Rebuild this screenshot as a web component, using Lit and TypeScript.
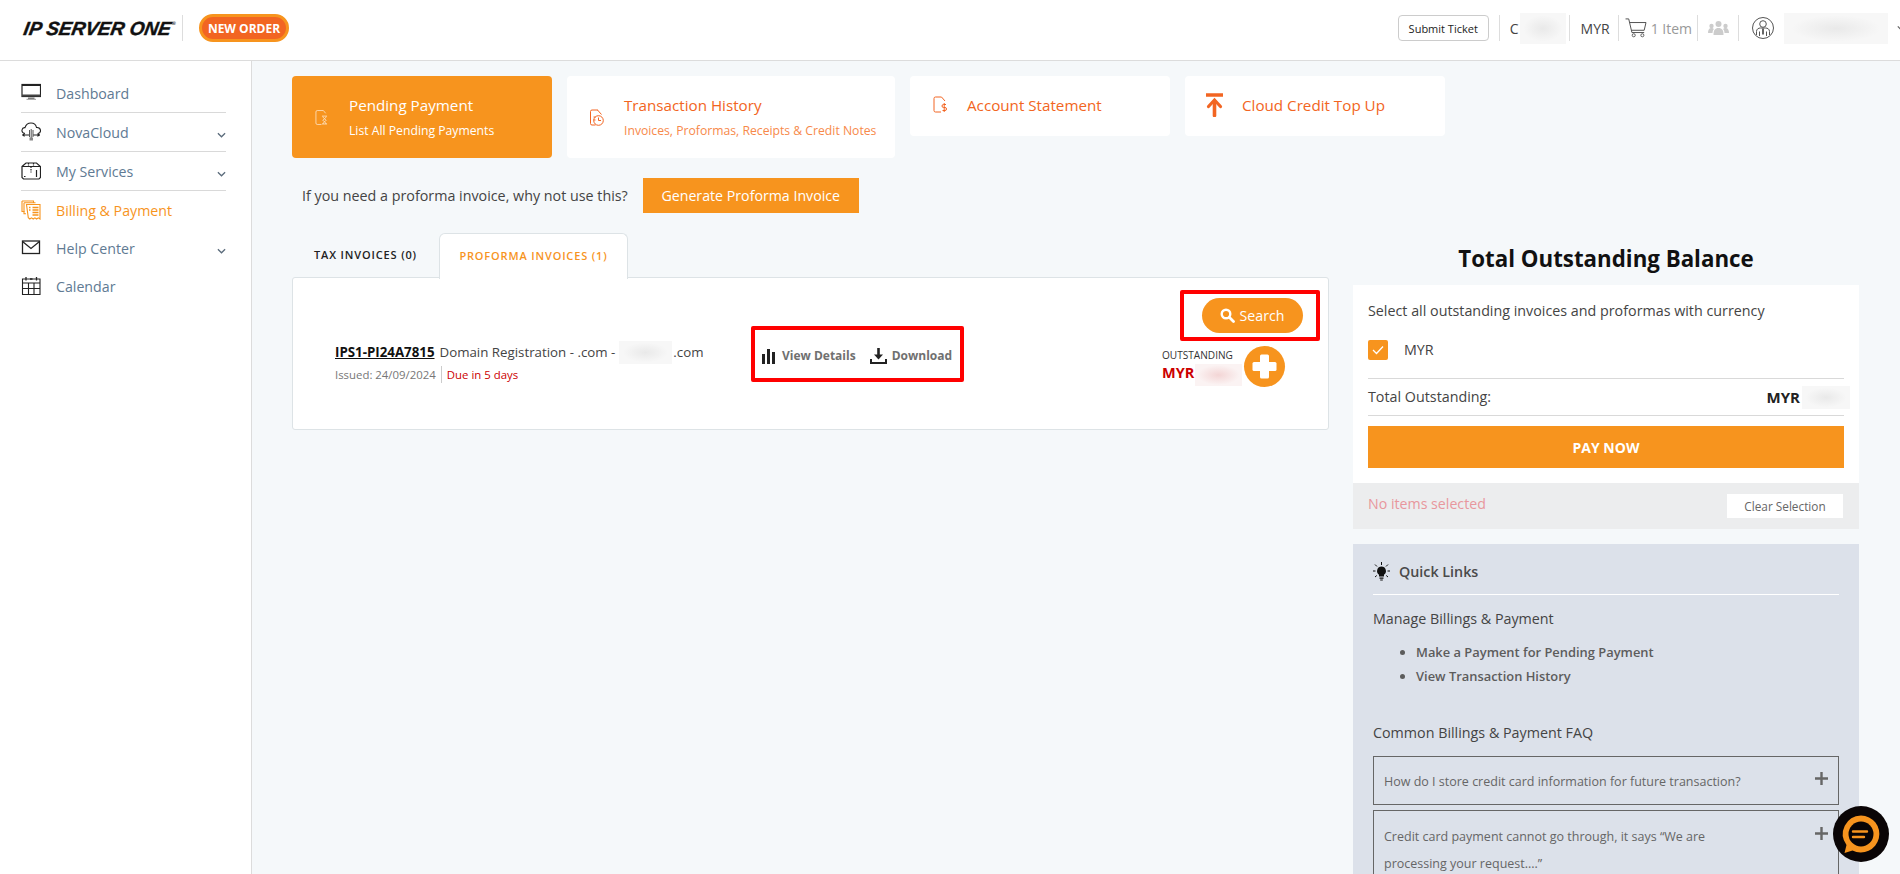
import { LitElement, html, css, svg } from 'lit';
import { customElement } from 'lit/decorators.js';

const chevron = html`<svg class="chev" viewBox="0 0 10 6" width="9" height="6"><path d="M1 1l4 4 4-4" fill="none" stroke="#5a6b7b" stroke-width="1.4"/></svg>`;

const navIcons: Record<string, unknown> = {
  monitor: svg`<rect x="1" y="1.5" width="18.500" height="12" fill="none" stroke="#222" stroke-width="1.2"/><rect x="1" y="1" width="18.500" height="2" fill="#222"/><rect x="1" y="11.500" width="18.500" height="2" fill="#444"/><path d="M7 14.500h6.500v1.500H7z" fill="#777"/><path d="M5.500 16.300h9.500" stroke="#999" stroke-width="1"/>`,
  cloud: svg`<path d="M4 11.500C1.500 11 .7 9.500 1 8c.3-1.600 1.700-2.500 3-2.300C4.800 3 7.200 1 10 1c3 0 5 2 5.500 4.500 2-.2 3.800 1 4 3 .1 1.500-.8 2.600-2.500 3" fill="none" stroke="#222" stroke-width="1.100"/><path d="M1.500 13h7M12 13h7" stroke="#222" stroke-width="1.200"/><path d="M3.500 11l-2.500 2 2.500 2zM16.500 11l2.500 2-2.500 2z" fill="#222"/><path d="M8.500 8v7M10.200 7v9M12 8v7" stroke="#555" stroke-width="1"/><rect x="8.500" y="15.500" width="3.500" height="3" fill="#888"/>`,
  box: svg`<path d="M1 5.500L5 2h10.500l4 3.500v11l-1.500 1.500H2.500L1 16.500zM1 5.500h18.500" fill="none" stroke="#222" stroke-width="1.200"/><path d="M7.500 2v3.500M12.500 2v3.500M10 5.500v6" stroke="#222" stroke-width="1.200" stroke-dasharray="1.500 1"/><path d="M3 15.500h1.500M15.500 9v7" stroke="#222" stroke-width="1.200"/>`,
  billing: svg`<g fill="none" stroke="#f7941e" stroke-width="1.100"><path d="M1 1h11.500v2M1 1v10.500h2.500"/><path d="M3 2.800h11.500M3 2.800v11h2"/><path d="M5.500 4.500h13.500v14.500l-1.700-1.200-1.700 1.200-1.700-1.200-1.700 1.200-1.700-1.200-1.700 1.200-1.500-1.200z"/><path d="M11.500 7.500h6M11.500 10h6M11.500 12.500h6M11.500 15h6M8 7.500h1.500M8 10h1.500" stroke-width="1.300"/></g>`,
  mail: svg`<rect x="1.500" y="3" width="17" height="12.500" fill="none" stroke="#222" stroke-width="1.300"/><path d="M1.500 3.500L10 10.500l8.500-7" fill="none" stroke="#222" stroke-width="1.300"/>`,
  calendar: svg`<g fill="none" stroke="#222" stroke-width="1.100"><path d="M1.500 3h17.500v15.500H1.500zM1.500 7h17.500M1.500 12.500h17.500M7.500 7v11.500M13 7v11.500"/><path d="M5 1v3.500M15.500 1v3.500M9 3h2.500" stroke-width="1.300"/></g>`,
};

const cardIcons: Record<string, unknown> = {
  hourglass: svg`<g fill="none" stroke="rgba(255,255,255,.65)" stroke-width="1"><path d="M9 1H2.500A1.500 1.500 0 0 0 1 2.500v12A1.500 1.500 0 0 0 2.500 16H7"/><path d="M9 1l2.500 3"/><path d="M7.500 7h5.500M7.500 15.500h5.500M8.500 7.500c0 2 3.500 3 3.500 4s-3.500 2-3.500 4M12 7.500c0 2-3.500 3-3.500 4s3.500 2 3.500 4"/></g>`,
  clock: svg`<g fill="none" stroke="#f26522" stroke-width="1"><path d="M8.500 1H2.500A1.500 1.500 0 0 0 1 2.500v12A1.500 1.500 0 0 0 2.500 16H6"/><path d="M8 1l4 4.500"/><circle cx="9" cy="11.500" r="4.800"/><path d="M9 8.500v3h2.500M4 8h2M4 11h2"/></g>`,
  dollar: svg`<g fill="none" stroke="#f26522" stroke-width="1"><path d="M8.500 1H2.500A1.500 1.500 0 0 0 1 2.500v12A1.500 1.500 0 0 0 2.500 16H8"/><path d="M8.500 1l3.500 4"/><path d="M13 8.500h-2.500a1.200 1.200 0 0 0 0 3h1.500a1.200 1.200 0 0 1 0 3H9.500M11.200 7v9"/></g>`,
  upload: svg`<path d="M.5 1.500h16" stroke="#f26522" stroke-width="3.400" stroke-linecap="round" transform="translate(0 .5)"/><path d="M8.500 22.500V8" stroke="#f26522" stroke-width="3.600" stroke-linecap="round"/><path d="M2.500 13.500L8.500 7l6 6.500" fill="none" stroke="#f26522" stroke-width="3.200" stroke-linecap="round"/>`,
};

const tiles = [
  { icon: 'hourglass', w: 13, h: 17, vb: '0 0 14 17', title: 'Pending Payment', sub: 'List All Pending Payments', cls: 'tile active wide' },
  { icon: 'clock', w: 16, h: 17, vb: '0 0 15 17', title: 'Transaction History', sub: 'Invoices, Proformas, Receipts & Credit Notes', cls: 'tile second' },
  { icon: 'dollar', w: 14, h: 17, vb: '0 0 14 17', title: 'Account Statement', sub: '', cls: 'tile third' },
  { icon: 'upload', w: 17, h: 24, vb: '0 0 17 24', title: 'Cloud Credit Top Up', sub: '', cls: 'tile fourth' },
];

const nav = [
  { icon: 'monitor', label: 'Dashboard', more: false, line: true },
  { icon: 'cloud', label: 'NovaCloud', more: true, line: true },
  { icon: 'box', label: 'My Services', more: true, line: true },
  { icon: 'billing', label: 'Billing & Payment', more: false, line: false, on: true },
  { icon: 'mail', label: 'Help Center', more: true, line: false },
  { icon: 'calendar', label: 'Calendar', more: false, line: false },
];

@customElement('app-root')
export class AppRoot extends LitElement {
  static styles = css`
    :host {
      display: block;
      height: 874px;
      overflow: hidden;
      position: relative;
      font-family: "Open Sans", "Liberation Sans", sans-serif;
      color: #333;
      background: #f5f8fa;
    }

    /* header */
    .top {
      height: 61px;
      box-sizing: border-box;
      background: #fff;
      border-bottom: 1px solid #dcdcdc;
      display: flex;
      align-items: center;
      padding: 0 0 4px 24px;
    }
    .logo {
      font: italic 700 19px/1 "Liberation Sans", sans-serif;
      -webkit-text-stroke: .4px #111;
      color: #111;
      width: 146px;
      white-space: nowrap;
      transform: skewX(-10deg);
      transform-origin: 0 50%;
    }
    .logo sup { font-size: 5px; vertical-align: 10px; font-style: normal; -webkit-text-stroke: 0; }
    .logo-sep { width: 1px; height: 26px; background: #ddd; margin: 0 16px 0 12px; }
    .new-order {
      width: 90px;
      height: 28px;
      box-sizing: border-box;
      border: 3px solid #f7941e;
      border-radius: 14px;
      background: #f26522;
      color: #fff;
      font-size: 12px;
      font-weight: 700;
      display: flex;
      align-items: center;
      justify-content: center;
    }
    .top-right { margin-left: auto; margin-right: -5px; display: flex; align-items: center; height: 100%; }
    .ticket {
      width: 91px;
      height: 26px;
      box-sizing: border-box;
      border: 1px solid #ccc;
      border-radius: 4px;
      font-size: 11px;
      color: #222;
      display: flex;
      align-items: center;
      justify-content: center;
    }
    .v { width: 1px; height: 26px; background: #ddd; }
    .ccy { font-size: 14px; color: #444; margin: 0 8px 0 11px; }
    .ccy.c { margin: 0 1px 0 10px; }
    .smudge { display: inline-block; background: radial-gradient(closest-side, #e9e9e9, #f7f7f7 85%); }
    .top-right .name { width: 46px; height: 31px; }
    .top-right .user { width: 104px; height: 31px; margin-left: 10px; }
    .items { font-size: 14px; color: #999; margin: 0 5px 0 4px; white-space: nowrap; }
    .cart { margin-left: 6px; }
    .people { margin: 0 9px 0 10px; }
    .person { margin-left: 13px; }
    .user-chev { margin-left: 9px; }

    /* page */
    .page { display: flex; height: 813px; }
    aside {
      width: 252px;
      flex: none;
      box-sizing: border-box;
      background: #fff;
      border-right: 1px solid #dcdcdc;
      padding: 13px 0 0 21px;
    }
    .nav-item {
      width: 205px;
      height: 38px;
      box-sizing: border-box;
      display: flex;
      align-items: center;
      font-size: 14.200px;
      color: #607a93;
      position: relative;
    }
    .nav-item.line { height: 39px; border-bottom: 1px solid #d9d9d9; }
    .nav-item.on { color: #f7941e; }
    .nav-item svg.ico { width: 20px; height: 20px; margin-right: 15px; flex: none; }
    .chev { margin-left: auto; margin-top: 6px; }

    main { flex: 1; padding: 15px 0 0 40px; min-width: 0; }
    .tiles { display: flex; gap: 15px; align-items: flex-start; }
    .tile {
      box-sizing: border-box;
      background: #fff;
      border-radius: 4px;
      height: 60px;
      width: 260px;
      display: flex;
      align-items: center;
      color: #f26522;
    }
    .tile .t-ico { flex: none; }
    .tile b { display: block; font-weight: 400; font-size: 15.200px; line-height: 20px; white-space: nowrap; }
    .tile small { display: block; font-size: 12.200px; line-height: 18px; margin-top: 7px; color: #f7894a; white-space: nowrap; }
    .tile.active { background: #f7941e; color: #fff; height: 82px; padding-left: 23px; }
    .tile.active small { color: #fff; }
    .tile.active .t-ico { margin-right: 21px; }
    .tile.second { width: 328px; height: 82px; padding-left: 22px; }
    .tile.second .t-ico { margin-right: 19px; }
    .tile.third { padding: 0 0 3px 23px; }
    .tile.third .t-ico { margin-right: 20px; }
    .tile.fourth { padding: 0 0 3px 21px; }
    .tile.fourth .t-ico { margin-right: 19px; }

    .proforma { display: flex; align-items: center; margin: 20px 0 0 10px; font-size: 14.300px; color: #444; }
    .proforma button {
      margin-left: 15px;
      width: 216px;
      height: 35px;
      border: 0;
      background: #f7941e;
      color: #fff;
      font: 400 14.200px "Open Sans", sans-serif;
    }

    .cols { display: flex; gap: 24px; margin-top: 20px; }
    .left { width: 1037px; flex: none; }
    .tabs { display: flex; height: 45px; position: relative; z-index: 1; }
    .tab {
      font-size: 11px;
      font-weight: 600;
      letter-spacing: .85px;
      color: #222;
      display: flex;
      align-items: center;
      justify-content: center;
      box-sizing: border-box;
      white-space: nowrap;
      padding-bottom: 2px;
    }
    .tab.off { width: 147px; }
    .tab.sel {
      width: 189px;
      color: #f7941e;
      background: #fff;
      border: 1px solid #dde3e6;
      border-bottom: 0;
      border-radius: 6px 6px 0 0;
      height: 46px;
    }
    .panel {
      height: 153px;
      margin-top: -1px;
      box-sizing: border-box;
      background: #fff;
      border: 1px solid #dde3e6;
      border-radius: 3px;
      position: relative;
    }
    .row {
      position: absolute;
      left: 42px;
      top: 63px;
      font-size: 13.300px;
      color: #444;
      white-space: nowrap;
    }
    .row .first { display: flex; align-items: center; height: 22px; }
    .row a { font-weight: 700; color: #111; text-decoration: underline; margin-right: 5px; }
    .row .dom { width: 53px; height: 23px; margin: 0 1px 0 4px; }
    .row .meta { display: flex; align-items: center; font-size: 11.400px; color: #777; margin-top: 2px; height: 18px; }
    .row .meta i { width: 1px; height: 17px; background: #ccc; margin: 0 5px; }
    .row .meta em { font-style: normal; color: #c00; }

    .mark { position: absolute; box-sizing: border-box; border: 4px solid #f00; border-radius: 2px; }
    .actions {
      left: 458px;
      top: 48px;
      width: 213px;
      height: 56px;
      display: flex;
      align-items: center;
      padding: 2px 0 0 7px;
      font-size: 12px;
      font-weight: 700;
      color: #707070;
      white-space: nowrap;
    }
    .actions svg { flex: none; margin-top: 2px; }
    .actions .bars { margin-right: 6px; }
    .actions .down { margin: 2px 5px 0 14px; }
    .search-mark { left: 887px; top: 12px; width: 140px; height: 51px; display: flex; align-items: center; justify-content: center; padding-left: 4px; }
    .search {
      width: 101px;
      height: 35px;
      border-radius: 18px;
      background: #f7941e;
      color: #fff;
      display: flex;
      align-items: center;
      justify-content: center;
      gap: 5px;
      font-size: 14.200px;
    }
    .out { position: absolute; left: 869px; top: 68px; white-space: nowrap; }
    .out span { display: block; font-size: 10.100px; line-height: 18px; color: #333; }
    .out strong { display: flex; align-items: center; height: 18px; font-size: 14.500px; line-height: 18px; color: #c00; }
    .out strong i { width: 47px; height: 22px; background: radial-gradient(closest-side, #f3d5d5, #fbf3f3 90%); margin: 4px 0 0 1px; }
    .plus {
      position: absolute;
      left: 951px;
      top: 68px;
      width: 41px;
      height: 41px;
      border-radius: 50%;
      background: #f7941e;
    }

    .right { width: 506px; flex: none; }
    .right h2 { margin: 0; height: 52px; line-height: 52px; text-align: center; font-size: 22.300px; font-weight: 700; color: #111; }
    .sum { background: #fff; height: 198px; box-sizing: border-box; padding: 15px 15px 0; font-size: 14.300px; color: #444; }
    .sum p { margin: 0; line-height: 22px; }
    .check { display: flex; align-items: center; height: 20px; margin-top: 18px; gap: 16px; }
    .check i { width: 20px; height: 20px; border-radius: 2px; background: #f7941e; display: flex; align-items: center; justify-content: center; }
    .check span, .total > span { padding-bottom: 2px; }
    .total {
      margin-top: 18px;
      height: 36px;
      border-top: 1px solid #d9d9d9;
      border-bottom: 1px solid #d9d9d9;
      display: flex;
      align-items: center;
      justify-content: space-between;
    }
    .total strong { display: flex; align-items: center; font-size: 15px; color: #222; margin-right: -6px; }
    .total strong i { width: 48px; height: 23px; margin-left: 2px; }
    .pay {
      width: 100%;
      height: 42px;
      margin-top: 10px;
      border: 0;
      background: #f7941e;
      color: #fff;
      font: 700 14px "Open Sans", sans-serif;
    }
    .none {
      background: #ecedee;
      height: 46px;
      box-sizing: border-box;
      display: flex;
      align-items: center;
      justify-content: space-between;
      padding: 0 16px 6px 15px;
      font-size: 14.200px;
      color: #e8979d;
    }
    .none span {
      width: 116px;
      height: 24px;
      margin-top: 6px;
      background: #fff;
      color: #666;
      font-size: 11.800px;
      display: flex;
      align-items: center;
      justify-content: center;
    }
    .links { margin-top: 15px; background: #dce1ea; height: 340px; box-sizing: border-box; padding: 14px 20px 0; color: #444; font-size: 14.300px; }
    .links header { display: flex; align-items: center; gap: 9px; height: 27px; padding-bottom: 9px; border-bottom: 1px solid #fff; font-weight: 600; color: #4a4a4a; }
    .links .h { margin: 13px 0 0; line-height: 22px; }
    .links ul { margin: 10px 0 0; padding: 0 0 0 43px; font-size: 12.900px; font-weight: 600; color: #5c5c5c; }
    .links li { line-height: 24px; }
    .links .faq-h { margin-top: 34px; }
    .faq {
      position: relative;
      border: 1px solid #666;
      box-sizing: border-box;
      padding: 2px 50px 0 10px;
      font-size: 12.500px;
      line-height: 27px;
      color: #666;
      margin-top: 12px;
      height: 49px;
      display: flex;
      align-items: center;
    }
    .faq.two { margin-top: 5px; height: 80px; align-items: flex-start; padding: 12px 100px 0 10px; }
    .faq svg { position: absolute; right: 10px; top: 15px; }
    .faq.two svg { top: 16px; }
    .chat { position: absolute; left: 1833px; top: 806px; }
  `;

  render() {
    return html`
      <div class="top">
        <div class="logo">IP SERVER ONE<sup>®</sup></div>
        <div class="logo-sep"></div>
        <div class="new-order">NEW ORDER</div>
        <div class="top-right">
          <div class="ticket">Submit Ticket</div>
          <div class="v" style="margin-left:10px"></div>
          <span class="ccy c">C</span>
          <span class="smudge name"></span>
          <div class="v" style="margin-left:3px"></div>
          <span class="ccy">MYR</span>
          <div class="v"></div>
          <svg class="cart" width="22" height="20" viewBox="0 0 24 22">
            <path d="M.5 1h3.500l3.500 15h13.500M5 5h18l-2 8.500H7" fill="none" stroke="#555" stroke-width="1.100"/>
            <circle cx="9.500" cy="19" r="1.700" fill="none" stroke="#555"/><circle cx="19" cy="19" r="1.700" fill="none" stroke="#555"/>
          </svg>
          <span class="items">1 Item</span>
          <div class="v"></div>
          <svg class="people" width="21" height="14" viewBox="0 0 21 14" fill="#ccc">
            <circle cx="10.500" cy="3" r="3"/><circle cx="3.500" cy="5" r="2.200"/><circle cx="17.500" cy="5" r="2.200"/>
            <path d="M5.500 14c0-5 1.500-7 5-7s5 2 5 7z"/><path d="M0 12c0-3 1-5 3.500-5 1 0 2 .5 2.500 1-1 1-1.500 2.500-1.500 4zM21 12c0-3-1-5-3.500-5-1 0-2 .5-2.500 1 1 1 1.500 2.500 1.500 4z"/>
          </svg>
          <div class="v"></div>
          <svg class="person" width="22" height="22" viewBox="0 0 22 22" fill="none" stroke="#555" stroke-width="1">
            <circle cx="11" cy="11" r="10.500"/><circle cx="11" cy="7" r="3.300"/>
            <path d="M4.500 18v-3.500c0-2.500 2-3.500 4-3.500h5c2 0 4 1 4 3.500V18M7.500 14.500V19M14.500 14.500V19"/><path d="M11 11.500v6" stroke-width="1.800"/>
          </svg>
          <span class="smudge user"></span>
          <svg class="user-chev" width="8" height="6" viewBox="0 0 10 6"><path d="M1 1l4 4 4-4" fill="none" stroke="#666" stroke-width="1.500"/></svg>
        </div>
      </div>

      <div class="page">
        <aside>
          ${nav.map(n => html`
            <div class="nav-item ${n.line ? 'line' : ''} ${n.on ? 'on' : ''}">
              <svg class="ico" viewBox="0 0 20 20">${navIcons[n.icon]}</svg>
              ${n.label}
              ${n.more ? chevron : ''}
            </div>
          `)}
        </aside>

        <main>
          <div class="tiles">
            ${tiles.map(t => html`
              <div class=${t.cls}>
                <svg class="t-ico" width=${t.w} height=${t.h} viewBox=${t.vb}>${cardIcons[t.icon]}</svg>
                <div>
                  <b>${t.title}</b>
                  ${t.sub ? html`<small>${t.sub}</small>` : ''}
                </div>
              </div>
            `)}
          </div>

          <div class="proforma">
            If you need a proforma invoice, why not use this?
            <button>Generate Proforma Invoice</button>
          </div>

          <div class="cols">
            <div class="left">
              <div class="tabs">
                <div class="tab off">TAX INVOICES (0)</div>
                <div class="tab sel">PROFORMA INVOICES (1)</div>
              </div>
              <div class="panel">
                <div class="row">
                  <div class="first">
                    <a>IPS1-PI24A7815</a> Domain Registration - .com -
                    <span class="smudge dom"></span>.com
                  </div>
                  <div class="meta">Issued: 24/09/2024<i></i><em>Due in 5 days</em></div>
                </div>

                <div class="mark actions">
                  <svg class="bars" width="14" height="15" viewBox="0 0 14 15" fill="#222">
                    <rect x="0" y="5" width="3" height="10"/><rect x="5" y="0" width="3" height="15"/><rect x="10" y="3" width="3" height="12"/>
                  </svg>
                  View Details
                  <svg class="down" width="17" height="16" viewBox="0 0 17 16">
                    <path d="M8.500 0v8" stroke="#222" stroke-width="2.600"/><path d="M4 6.500h9L8.500 11.500z" fill="#222"/>
                    <path d="M1 11v4h15v-4" fill="none" stroke="#222" stroke-width="2"/>
                  </svg>
                  Download
                </div>

                <div class="mark search-mark">
                  <div class="search">
                    <svg width="15" height="15" viewBox="0 0 15 15" fill="none" stroke="#fff">
                      <circle cx="6" cy="6" r="4.300" stroke-width="2.400"/><path d="M9.500 9.500l4 4" stroke-width="2.800" stroke-linecap="round"/>
                    </svg>
                    Search
                  </div>
                </div>

                <div class="out"><span>OUTSTANDING</span><strong>MYR<i></i></strong></div>
                <div class="plus">
                  <svg width="41" height="41" viewBox="0 0 41 41" fill="#fff">
                    <rect x="16" y="8.500" width="9" height="24" rx="1.500"/><rect x="8.500" y="16" width="24" height="9" rx="1.500"/>
                  </svg>
                </div>
              </div>
            </div>

            <div class="right">
              <h2>Total Outstanding Balance</h2>
              <div class="sum">
                <p>Select all outstanding invoices and proformas with currency</p>
                <div class="check">
                  <i><svg width="12" height="10" viewBox="0 0 12 10"><path d="M1 5l3.500 3.500L11 1.500" fill="none" stroke="#fff" stroke-width="1.300"/></svg></i>
                  <span>MYR</span>
                </div>
                <div class="total">
                  <span>Total Outstanding:</span>
                  <strong>MYR<i class="smudge"></i></strong>
                </div>
                <button class="pay">PAY NOW</button>
              </div>
              <div class="none">No items selected<span>Clear Selection</span></div>

              <div class="links">
                <header>
                  <svg width="17" height="19" viewBox="0 0 17 19">
                    <path d="M8.500 4.500a4.500 4.500 0 0 0-2.500 8.200V14.500h5v-1.800a4.500 4.500 0 0 0-2.500-8.200z" fill="#111"/>
                    <path d="M6.500 15.500h4v1.200h-4zM7.200 17.500h2.600v1H7.200z" fill="#111"/>
                    <path d="M8.500 0v3M2 2.500l2 2M15 2.500l-2 2M0 9h2.500M14.500 9H17M2 15l1.800-1.500M15 15l-1.800-1.500" stroke="#111" stroke-width="1"/>
                  </svg>
                  Quick Links
                </header>
                <p class="h">Manage Billings &amp; Payment</p>
                <ul>
                  <li>Make a Payment for Pending Payment</li>
                  <li>View Transaction History</li>
                </ul>
                <p class="h faq-h">Common Billings &amp; Payment FAQ</p>
                <div class="faq">
                  How do I store credit card information for future transaction?
                  <svg width="13" height="13" viewBox="0 0 13 13"><path d="M6.500 0v13M0 6.500h13" stroke="#666" stroke-width="2.400"/></svg>
                </div>
                <div class="faq two">
                  <span>Credit card payment cannot go through, it says “We are processing your request....”</span>
                  <svg width="13" height="13" viewBox="0 0 13 13"><path d="M6.500 0v13M0 6.500h13" stroke="#666" stroke-width="2.400"/></svg>
                </div>
              </div>
            </div>
          </div>
        </main>
      </div>

      <svg class="chat" width="56" height="56" viewBox="0 0 56 56">
        <circle cx="28" cy="28" r="28" fill="#0a0506"/>
        <path d="M28 9.500a18.500 18.500 0 1 1-8.500 35l-8 2.500 2-8A18.500 18.500 0 0 1 28 9.500z" fill="#f7941e"/>
        <circle cx="28" cy="28" r="12.500" fill="#0a0506"/>
        <path d="M20 25.500h14M20 31h11" stroke="#f7941e" stroke-width="2.400" stroke-linecap="round"/>
      </svg>
    `;
  }
}
